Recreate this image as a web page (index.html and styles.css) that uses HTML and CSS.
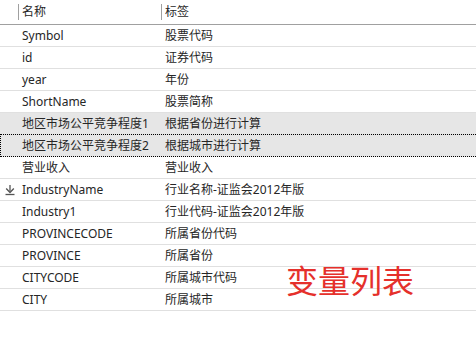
FILE: index.html
```html
<!DOCTYPE html>
<html>
<head>
<meta charset="utf-8">
<link rel="stylesheet" href="styles.css">
</head>
<body>
<div class="grid">
  <div class="head">
    <div class="cell icon"></div>
    <div class="cell hname">名称</div>
    <div class="cell hlabel">标签</div>
  </div>
  <div class="row"><div class="icon"></div><div class="cell">Symbol</div><div class="cell">股票代码</div></div>
  <div class="row"><div class="icon"></div><div class="cell">id</div><div class="cell">证券代码</div></div>
  <div class="row"><div class="icon"></div><div class="cell">year</div><div class="cell">年份</div></div>
  <div class="row"><div class="icon"></div><div class="cell">ShortName</div><div class="cell">股票简称</div></div>
  <div class="row sel"><div class="icon"></div><div class="cell">地区市场公平竞争程度1</div><div class="cell">根据省份进行计算</div></div>
  <div class="row sel focus"><div class="icon"></div><div class="cell">地区市场公平竞争程度2</div><div class="cell">根据城市进行计算</div></div>
  <div class="row"><div class="icon"></div><div class="cell">营业收入</div><div class="cell">营业收入</div></div>
  <div class="row"><div class="icon"><svg width="12" height="12" viewBox="0 0 12 12"><path d="M6 1v6.5" stroke="#555" stroke-width="1.3" fill="none"/><path d="M2.2 4.6L6 8.4 9.8 4.6" stroke="#555" stroke-width="1.4" fill="none"/><path d="M1.5 10.5h9" stroke="#555" stroke-width="1.3"/></svg></div><div class="cell">IndustryName</div><div class="cell">行业名称-证监会2012年版</div></div>
  <div class="row"><div class="icon"></div><div class="cell">Industry1</div><div class="cell">行业代码-证监会2012年版</div></div>
  <div class="row"><div class="icon"></div><div class="cell">PROVINCECODE</div><div class="cell">所属省份代码</div></div>
  <div class="row"><div class="icon"></div><div class="cell">PROVINCE</div><div class="cell">所属省份</div></div>
  <div class="row"><div class="icon"></div><div class="cell">CITYCODE</div><div class="cell">所属城市代码</div></div>
  <div class="row"><div class="icon"></div><div class="cell">CITY</div><div class="cell">所属城市</div></div>
</div>
<div class="stamp">变量列表</div>
</body>
</html>
```
FILE: styles.css
```css
html, body {
  margin: 0;
  padding: 0;
  background: #ffffff;
}
body {
  position: relative;
  width: 476px;
  height: 345px;
  overflow: hidden;
  font-family: "Noto Sans", "Noto Sans CJK SC", sans-serif;
  font-size: 12px;
  color: #262626;
}
.grid {
  display: flex;
  flex-direction: column;
  width: 476px;
}
.head, .row {
  display: grid;
  grid-template-columns: 18px 143px 1fr;
  align-items: center;
}
.head {
  height: 24px;
  border-bottom: 1px solid #a0a0a0;
}
.head .hname, .head .hlabel {
  border-left: 1px solid #a0a0a0;
  height: 16px;
  line-height: 16px;
  padding-left: 3px;
}
.row {
  height: 21px;
  border-bottom: 1px solid #e0e0e0;
}
.cell {
  padding-left: 4px;
  white-space: nowrap;
  line-height: 21px;
}
.head .cell {
  line-height: 16px;
}
.icon {
  display: flex;
  align-items: center;
  justify-content: center;
  height: 100%;
  padding-left: 2px;
}
.row.sel {
  background: #e6e6e6;
}
.row.focus {
  position: relative;
  border-bottom-color: transparent;
}
.row.focus::after {
  content: "";
  position: absolute;
  left: 0;
  right: -2px;
  top: -1px;
  bottom: -1px;
  border: 1px dotted #000;
  border-right: none;
}
.stamp {
  position: absolute;
  left: 286px;
  top: 262px;
  font-family: "Noto Sans CJK SC", sans-serif;
  font-size: 32px;
  line-height: 34px;
  color: #e5302b;
}
```
